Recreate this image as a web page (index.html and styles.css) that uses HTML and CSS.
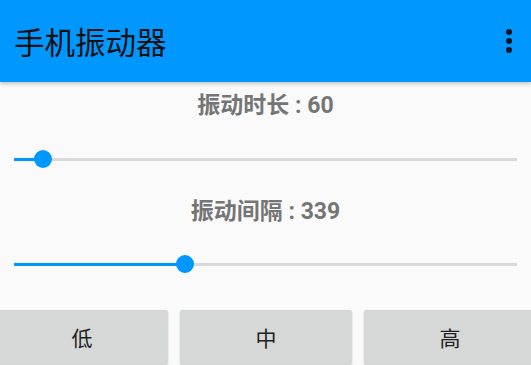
FILE: index.html
```html
<!DOCTYPE html>
<html lang="zh-CN">
<head>
<meta charset="utf-8">
<title>手机振动器</title>
<link rel="stylesheet" href="styles.css">
</head>
<body>
<header class="appbar">
  <h1 class="title">手机振动器</h1>
  <div class="menu" aria-label="更多选项">
    <span class="dot"></span><span class="dot"></span><span class="dot"></span>
  </div>
</header>
<main class="content">
  <div class="label">振动时长 : 60</div>
  <div class="slider slider-first">
    <div class="track"></div>
    <div class="fill" style="width:5.8%"></div>
    <div class="thumb" style="left:5.8%"></div>
  </div>
  <div class="label label-second">振动间隔 : 339</div>
  <div class="slider slider-second">
    <div class="track"></div>
    <div class="fill" style="width:34%"></div>
    <div class="thumb" style="left:34%"></div>
  </div>
  <div class="buttons">
    <button class="btn">低</button>
    <button class="btn">中</button>
    <button class="btn">高</button>
  </div>
</main>
</body>
</html>
```
FILE: styles.css
```css
html, body {
  margin: 0;
  padding: 0;
}
body {
  width: 531px;
  height: 365px;
  overflow: hidden;
  background: #fafafa;
  font-family: "Roboto", "Noto Sans CJK SC", sans-serif;
}
.appbar {
  height: 82px;
  background: #0097ff;
  display: flex;
  align-items: center;
  justify-content: space-between;
  padding: 0 19px 0 14px;
  box-shadow: 0 2px 4px rgba(0, 0, 0, 0.22);
  position: relative;
  z-index: 1;
}
.title {
  margin: 0;
  font-size: 30.5px;
  font-weight: 400;
  line-height: 30px;
  color: #111;
  font-family: "Noto Sans CJK SC", sans-serif;
}
.menu {
  display: flex;
  flex-direction: column;
  gap: 3.3px;
}
.dot {
  width: 6px;
  height: 6px;
  border-radius: 50%;
  background: #0b1620;
}
.content {
  padding-top: 12px;
}
.label {
  text-align: center;
  font-size: 23px;
  line-height: 23px;
  height: 23px;
  font-weight: 700;
  color: #757575;
}
.label-second {
  margin-top: 26px;
}
.slider {
  position: relative;
  height: 30px;
  margin: 27px 14px 0 14px;
}
.slider-second {
  margin-top: 26px;
}
.track, .fill {
  position: absolute;
  top: 14px;
  height: 3px;
  left: 0;
}
.track {
  right: 0;
  background: #d9d9d9;
}
.fill {
  background: #0097ff;
}
.thumb {
  position: absolute;
  top: 15px;
  width: 18px;
  height: 18px;
  border-radius: 50%;
  background: #0097ff;
  transform: translate(-50%, -50%);
}
.buttons {
  display: flex;
  gap: 12px;
  width: 540px;
  margin: 31px 0 0 -4px;
}
.btn {
  flex: 1;
  height: 54px;
  border: none;
  border-radius: 2px;
  background: #d6d7d7;
  box-shadow: 0 1px 2px rgba(0, 0, 0, 0.2);
  font-family: "Noto Sans CJK SC", sans-serif;
  font-size: 21px;
  color: #222;
  padding: 0;
  line-height: 54px;
}
```
